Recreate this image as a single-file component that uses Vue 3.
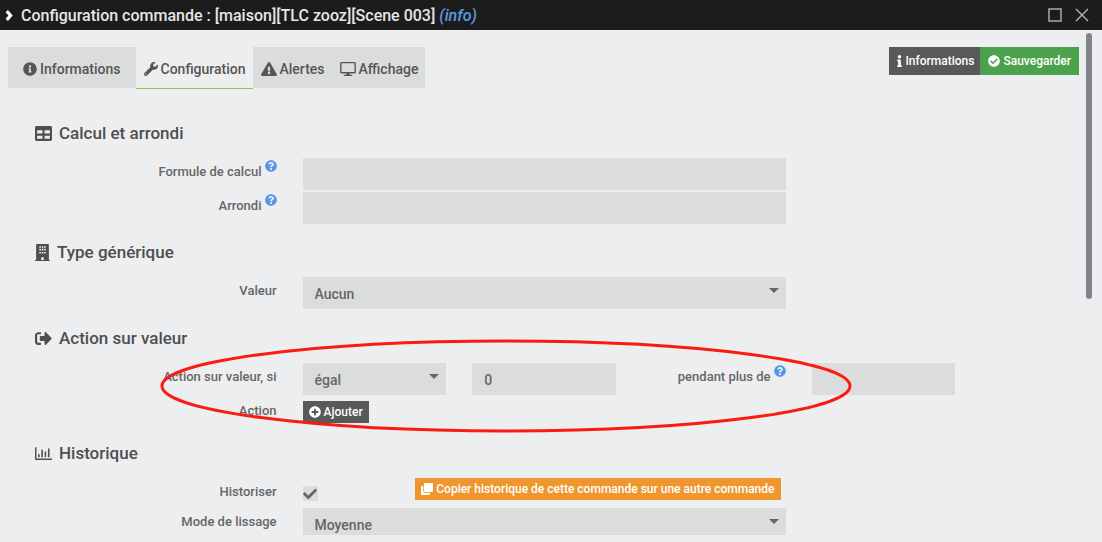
<script setup>
import { h, ref } from 'vue'

const glyphs = {
  info: ['0 0 512 512', 'M256 8C119.043 8 8 119.083 8 256c0 136.997 111.043 248 248 248s248-111.003 248-248C504 119.083 392.957 8 256 8zm0 110c23.196 0 42 18.804 42 42s-18.804 42-42 42-42-18.804-42-42 18.804-42 42-42zm56 254c0 6.627-5.373 12-12 12h-88c-6.627 0-12-5.373-12-12v-24c0-6.627 5.373-12 12-12h12v-64h-12c-6.627 0-12-5.373-12-12v-24c0-6.627 5.373-12 12-12h64c6.627 0 12 5.373 12 12v100h12c6.627 0 12 5.373 12 12v24z'],
  wrench: ['0 0 512 512', 'M507.73 109.1c-2.24-9.03-13.54-12.09-20.12-5.51l-74.36 74.36-67.88-11.31-11.31-67.88 74.36-74.36c6.62-6.62 3.43-17.9-5.66-20.16-47.38-11.74-99.55.91-136.58 37.93-39.64 39.64-50.55 97.1-34.05 147.2L18.74 402.76c-24.99 24.99-24.99 65.51 0 90.5 24.99 24.99 65.51 24.99 90.5 0l213.21-213.21c50.12 16.71 107.47 5.68 147.37-34.22 37.07-37.07 49.7-89.32 37.91-136.73zM64 472c-13.25 0-24-10.75-24-24 0-13.26 10.75-24 24-24s24 10.74 24 24c0 13.25-10.75 24-24 24z'],
  warning: ['0 0 576 512', 'M569.517 440.013C587.975 472.007 564.806 512 527.94 512H48.054c-36.937 0-59.999-40.055-41.577-71.987L246.423 23.985c18.467-32.009 64.72-31.951 83.154 0l239.94 416.028zM288 354c-25.405 0-46 20.595-46 46s20.595 46 46 46 46-20.595 46-46-20.595-46-46-46zm-43.673-165.346l7.418 136c.347 6.364 5.609 11.346 11.982 11.346h48.546c6.373 0 11.635-4.982 11.982-11.346l7.418-136c.375-6.874-5.098-12.654-11.982-12.654h-63.383c-6.884 0-12.356 5.78-11.981 12.654z'],
  desktop: ['0 0 576 512', 'M528 0H48C21.5 0 0 21.5 0 48v320c0 26.5 21.5 48 48 48h192l-16 48h-72c-13.3 0-24 10.7-24 24s10.7 24 24 24h272c13.3 0 24-10.7 24-24s-10.7-24-24-24h-72l-16-48h192c26.500 0 48-21.500 48-48V48c0-26.500-21.500-48-48-48zM526 366H50V50h476v316z'],
  letterI: ['0 0 192 512', 'M20 424.229h20V279.771H20c-11.046 0-20-8.954-20-20V212c0-11.046 8.954-20 20-20h112c11.046 0 20 8.954 20 20v212.229h20c11.046 0 20 8.954 20 20V492c0 11.046-8.954 20-20 20H20c-11.046 0-20-8.954-20-20v-47.771c0-11.046 8.954-20 20-20zM96 0C56.235 0 24 32.235 24 72s32.235 72 72 72 72-32.235 72-72S135.764 0 96 0z'],
  checkCircle: ['0 0 512 512', 'M504 256c0 136.967-111.033 248-248 248S8 392.967 8 256 119.033 8 256 8s248 111.033 248 248zM227.314 387.314l184-184c6.248-6.248 6.248-16.379 0-22.627l-22.627-22.627c-6.248-6.249-16.379-6.249-22.628 0L216 308.118l-70.059-70.059c-6.248-6.248-16.379-6.248-22.628 0l-22.627 22.627c-6.248 6.248-6.248 16.379 0 22.627l104 104c6.249 6.249 16.379 6.249 22.628.001z'],
  table: ['0 0 512 512', 'M464 32H48C21.490 32 0 53.490 0 80v352c0 26.510 21.490 48 48 48h416c26.510 0 48-21.490 48-48V80c0-26.510-21.490-48-48-48zM224 416H64v-96h160v96zm0-160H64v-96h160v96zm224 160H288v-96h160v96zm0-160H288v-96h160v96z'],
  building: ['0 0 448 512', 'M0 480h32V24c0-13 11-24 24-24h336c13 0 24 11 24 24v456h32v32H0zM128 64v48h48V64zm72 0v48h48V64zm72 0v48h48V64zM128 144v48h48v-48zm72 0v48h48v-48zm72 0v48h48v-48zM128 240v48h48v-48zm72 0v48h48v-48zm72 0v48h48v-48zM184 400v80h80v-80z'],
  signOut: ['0 0 512 512', 'M497 273L329 441c-15 15-41 4.500-41-17v-96H168c-13.300 0-24-10.700-24-24v-96c0-13.300 10.700-24 24-24h120V88c0-21.400 25.900-32 41-17l168 168c9.300 9.400 9.300 24.600 0 34zM180 436v-40c0-6.600-5.400-12-12-12H100c-20 0-36-16-36-36V164c0-20 16-36 36-36h68c6.600 0 12-5.400 12-12V76c0-6.600-5.400-12-12-12H96c-53 0-96 43-96 96v192c0 53 43 96 96 96h72c6.600 0 12-5.400 12-12z'],
  chart: ['0 0 512 512', 'M0 64h44v340h468v44H24c-14 0-24-10-24-24zM92 278h48v94H92zM190 142h48v230h-48zM290 198h48v174h-48zM390 102h48v270h-48z'],
  plus: ['0 0 512 512', 'M256 8C119 8 8 119 8 256s111 248 248 248 248-111 248-248S393 8 256 8zm144 276c0 6.600-5.400 12-12 12h-92v92c0 6.600-5.400 12-12 12h-56c-6.600 0-12-5.400-12-12v-92h-92c-6.600 0-12-5.400-12-12v-56c0-6.600 5.400-12 12-12h92v-92c0-6.600 5.400-12 12-12h56c6.600 0 12 5.400 12 12v92h92c6.600 0 12 5.400 12 12v56z'],
  help: ['0 0 512 512', 'M504 256c0 136.997-111.043 248-248 248S8 392.997 8 256C8 119.083 119.043 8 256 8s248 111.083 248 248zM262.655 90c-54.497 0-89.255 22.957-116.549 63.758-3.536 5.286-2.353 12.415 2.715 16.258l34.699 26.310c5.205 3.947 12.621 3.008 16.665-2.122 17.864-22.658 30.113-35.797 57.303-35.797 20.429 0 45.698 13.148 45.698 32.958 0 14.976-12.363 22.667-32.534 33.976C247.128 238.528 216 254.941 216 296v4c0 6.627 5.373 12 12 12h56c6.627 0 12-5.373 12-12v-1.333c0-28.462 83.186-29.647 83.186-106.667 0-58.002-60.165-102-116.531-102zM256 338c-25.365 0-46 20.635-46 46 0 25.364 20.635 46 46 46s46-20.636 46-46c0-25.365-20.635-46-46-46z'],
  check: ['0 0 512 512', 'M173.898 439.404l-166.400-166.400c-9.997-9.997-9.997-26.206 0-36.204l36.203-36.204c9.997-9.998 26.207-9.998 36.204 0L192 312.690 432.095 72.596c9.997-9.997 26.207-9.997 36.204 0l36.203 36.204c9.997 9.997 9.997 26.206 0 36.204l-294.400 294.401c-9.998 9.997-26.207 9.997-36.204-.001z'],
  clone: ['0 0 512 512', 'M464 0c26.510 0 48 21.490 48 48v288c0 26.510-21.490 48-48 48H176c-26.510 0-48-21.490-48-48V48c0-26.510 21.490-48 48-48h288M176 416c-44.112 0-80-35.888-80-80V128H48c-26.510 0-48 21.490-48 48v288c0 26.510 21.490 48 48 48h288c26.510 0 48-21.490 48-48v-48H176z'],
  chevron: ['0 0 320 512', 'M40 110L95 55c12-12 28-12 40 0l160 178c12 13 12 33 0 46L135 457c-12 12-28 12-40 0l-55-55c-12-12-12-28 0-40l98-106-98-106c-12-12-12-28 0-40z'],
  caret: ['0 0 10 5', 'M0 0h10L5 5z'],
}

const Icon = (props) =>
  h('svg', { viewBox: glyphs[props.name][0], 'aria-hidden': 'true' }, [
    h('path', { d: glyphs[props.name][1], fill: 'currentColor', 'fill-rule': 'evenodd' }),
  ])
Icon.props = ['name']

const tabs = [
  { label: 'Informations', icon: 'info', cls: 'first' },
  { label: 'Configuration', icon: 'wrench', cls: '' },
  { label: 'Alertes', icon: 'warning', cls: 'wide' },
  { label: 'Affichage', icon: 'desktop', cls: 'wide' },
]
const active = ref('Configuration')
const formula = ref('')
const rounding = ref('')
const generic = ref('Aucun')
const operator = ref('égal')
const threshold = ref('0')
const delay = ref('')
const history = ref(true)
const smoothing = ref('Moyenne')
</script>

<template>
  <div class="dialog">
    <header class="titlebar">
      <Icon name="chevron" class="chevron" />
      <h1>Configuration commande : [maison][TLC zooz][Scene 003] <em>(info)</em></h1>
      <button type="button" class="win" aria-label="Agrandir">
        <svg viewBox="0 0 14 14"><rect x="1" y="1" width="12" height="12" /></svg>
      </button>
      <button type="button" class="win" aria-label="Fermer">
        <svg viewBox="0 0 14 14"><path d="M1 1l12 12M13 1L1 13" /></svg>
      </button>
    </header>

    <main class="panel">
      <div class="top">
        <nav class="tabs">
          <button
            v-for="t in tabs"
            :key="t.label"
            type="button"
            :class="['tab', t.cls, { active: active === t.label }]"
            @click="active = t.label"
          >
            <Icon :name="t.icon" />{{ t.label }}
          </button>
        </nav>
        <div class="actions">
          <button type="button" class="btn dark about"><Icon name="letterI" class="thin" />Informations</button>
          <button type="button" class="btn green"><Icon name="checkCircle" />Sauvegarder</button>
        </div>
      </div>

      <form class="form" @submit.prevent>
        <section>
          <h2><Icon name="table" />Calcul et arrondi</h2>
          <div class="row">
            <label class="c3" for="formula">Formule de calcul <Icon name="help" class="help" /></label>
            <div class="c6"><input id="formula" v-model="formula" type="text" /></div>
          </div>
          <div class="row">
            <label class="c3" for="rounding">Arrondi <Icon name="help" class="help" /></label>
            <div class="c6"><input id="rounding" v-model="rounding" type="text" /></div>
          </div>
        </section>

        <section>
          <h2><Icon name="building" class="narrow" />Type générique</h2>
          <div class="row tall">
            <label class="c3" for="generic">Valeur</label>
            <div class="c6 pick">
              <select id="generic" v-model="generic"><option>Aucun</option></select>
              <Icon name="caret" class="caret" />
            </div>
          </div>
        </section>

        <section class="marked">
          <h2><Icon name="signOut" />Action sur valeur</h2>
          <div class="row">
            <label class="c3" for="operator">Action sur valeur, si</label>
            <div class="c2 pick">
              <select id="operator" v-model="operator"><option>égal</option></select>
              <Icon name="caret" class="caret" />
            </div>
            <div class="c2"><input v-model="threshold" type="text" aria-label="Valeur comparée" /></div>
            <label class="c2" for="delay">pendant plus de <Icon name="help" class="help" /></label>
            <div class="c2"><input id="delay" v-model="delay" type="text" /></div>
          </div>
          <div class="row short">
            <span class="c3 caption">Action</span>
            <div class="c6 line">
              <button type="button" class="btn dark small"><Icon name="plus" />Ajouter</button>
            </div>
          </div>
          <svg class="ring" viewBox="0 0 692 94" aria-hidden="true">
            <ellipse cx="346" cy="47" rx="344" ry="45" />
          </svg>
        </section>

        <section>
          <h2><Icon name="chart" />Historique</h2>
          <div class="row tight">
            <label class="c3" for="history">Historiser</label>
            <div class="c6 line spread">
              <span class="tick">
                <input id="history" v-model="history" type="checkbox" />
                <Icon v-if="history" name="check" />
              </span>
              <button type="button" class="btn orange small">
                <Icon name="clone" />Copier historique de cette commande sur une autre commande
              </button>
            </div>
          </div>
          <div class="row">
            <label class="c3" for="smoothing">Mode de lissage</label>
            <div class="c6 pick">
              <select id="smoothing" v-model="smoothing"><option>Moyenne</option></select>
              <Icon name="caret" class="caret" />
            </div>
          </div>
        </section>
      </form>
      <div class="scrollbar" aria-hidden="true"></div>
    </main>
  </div>
</template>

<style>
body {
  margin: 0;
  background: #edeef0;
}
</style>

<style scoped>
.dialog {
  display: flex;
  flex-direction: column;
  box-sizing: border-box;
  height: 100vh;
  padding-bottom: 7px;
  background: #edeef0;
  color: #666;
  font-family: Roboto, "Liberation Sans", sans-serif;
  font-size: 14px;
  font-weight: 500;
}
.dialog * {
  box-sizing: border-box;
}
svg {
  display: block;
  flex: none;
}
button,
input,
select {
  margin: 0;
  border: 0;
  border-radius: 0;
  font: inherit;
  color: inherit;
}
.titlebar {
  display: flex;
  flex: none;
  align-items: center;
  height: 30px;
  padding: 0 13px 0 5px;
  background: #1c1c1c;
  color: #e6e6e6;
}
.chevron {
  width: 8px;
  height: 13px;
  margin-right: 8px;
  color: #fff;
}
h1 {
  flex: 1;
  margin: 0;
  padding-top: 2px;
  font-size: 16px;
  font-weight: 500;
  line-height: 24px;
}
h1 em {
  color: #5a9be6;
}
.win {
  width: 14px;
  height: 14px;
  margin-left: 13px;
  padding: 0;
  background: none;
}
.win svg {
  width: 14px;
  height: 14px;
  fill: none;
  stroke: #b4b4b4;
  stroke-width: 1.4;
}
.panel {
  position: relative;
  flex: 1;
  min-height: 0;
  overflow: hidden;
  padding-top: 17px;
}
.top {
  display: flex;
  align-items: flex-start;
  justify-content: space-between;
  padding: 0 23px 0 8px;
}
.tabs {
  display: flex;
  background: #dbdddc;
}
.tab {
  display: flex;
  align-items: center;
  gap: 3px;
  height: 41px;
  padding: 3px 7px 0 8px;
  background: none;
  color: #555;
}
.tab.first {
  padding-right: 15px;
  padding-left: 15px;
}
.tab.active {
  background: #edeef0;
  box-shadow: 0 1px #94c83d;
}
.tab svg {
  width: 14px;
  height: 14px;
}
.tab.wide svg {
  width: 16px;
}
.actions {
  display: flex;
}
.btn {
  display: flex;
  align-items: center;
  gap: 3px;
  height: 28px;
  padding: 0 8px;
  color: #fff;
  font-size: 12px;
}
.btn svg {
  width: 12px;
  height: 12px;
}
.btn .thin {
  width: 5px;
}
.btn.about {
  padding-right: 6px;
}
.dark {
  background: #595959;
}
.green {
  background: #4ca24c;
}
.orange {
  background: #ef962f;
}
.btn.small {
  height: 22px;
  padding: 0 6px;
}
.form {
  padding: 33px 49px 0 35px;
}
section {
  padding-bottom: 14px;
}
h2 {
  display: flex;
  align-items: center;
  gap: 7px;
  margin: 0 0 13px;
  color: #4f4f4f;
  font-size: 17px;
  font-weight: 500;
  line-height: 24px;
}
h2 svg {
  width: 17px;
  height: 17px;
}
h2 .narrow {
  width: 15px;
}
.row {
  display: grid;
  grid-template-columns: repeat(12, minmax(0, 1fr));
  min-height: 32px;
  margin-bottom: 2px;
}
.row.tall {
  min-height: 33px;
}
.row.short,
.row.tight {
  min-height: 28px;
}
.row > * {
  padding: 0 13px;
}
.c2 {
  grid-column: span 2;
}
.c3 {
  grid-column: span 3;
}
.c6 {
  grid-column: span 6;
}
label,
.caption {
  display: flex;
  justify-content: flex-end;
  gap: 3px;
  font-size: 13px;
  line-height: 28px;
  white-space: nowrap;
}
.help {
  width: 12px;
  height: 12px;
  margin-top: 2px;
  color: #5596e6;
}
input[type="text"],
select {
  display: block;
  width: 100%;
  height: 32px;
  padding: 2px 12px 0;
  background: #dbdddc;
  appearance: none;
}
.pick {
  position: relative;
}
.caret {
  position: absolute;
  top: 11px;
  right: 20px;
  width: 10px;
  height: 5px;
  pointer-events: none;
}
.line {
  display: flex;
  align-items: flex-start;
}
.short .line {
  padding-top: 4px;
}
.row .spread {
  justify-content: space-between;
  padding-right: 18px;
}
.tick {
  position: relative;
  display: block;
  width: 15px;
  height: 15px;
  margin-top: 8px;
}
.tick input {
  display: block;
  width: 15px;
  height: 15px;
  background: #dbdddc;
  appearance: none;
}
.tick svg {
  position: absolute;
  top: 1px;
  left: 0;
  width: 14px;
  height: 14px;
  pointer-events: none;
}
.marked {
  position: relative;
}
.ring {
  position: absolute;
  top: 13px;
  left: 125px;
  width: 692px;
  height: 94px;
  pointer-events: none;
}
.ring ellipse {
  fill: none;
  stroke: #fb1b12;
  stroke-width: 3;
}
.scrollbar {
  position: absolute;
  top: 3px;
  right: 10px;
  width: 6px;
  height: 266px;
  border-radius: 3px;
  background: #82828a;
}
</style>
